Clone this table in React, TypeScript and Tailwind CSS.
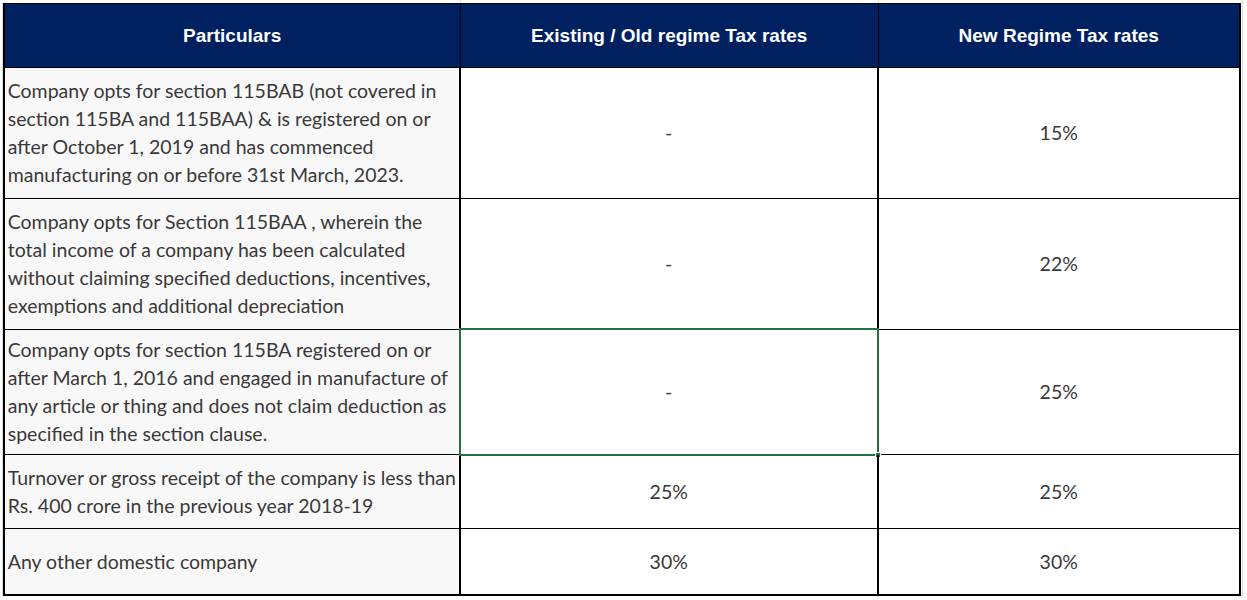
const rows = [
  {
    h: "h-[131px]",
    lines: [
      "Company opts for section 115BAB (not covered in",
      "section 115BA and 115BAA) & is registered on or",
      "after October 1, 2019 and has commenced",
      "manufacturing on or before 31st March, 2023.",
    ],
    old: "-",
    nu: "15%",
  },
  {
    h: "h-[131px]",
    lines: [
      "Company opts for Section 115BAA , wherein the",
      "total income of a company has been calculated",
      "without claiming specified deductions, incentives,",
      "exemptions and additional depreciation",
    ],
    old: "-",
    nu: "22%",
  },
  {
    h: "h-[125px]",
    lines: [
      "Company opts for section 115BA registered on or",
      "after March 1, 2016 and engaged in manufacture of",
      "any article or thing and does not claim deduction as",
      "specified in the section clause.",
    ],
    old: "-",
    nu: "25%",
    selected: true,
  },
  {
    h: "h-[74px]",
    lines: [
      "Turnover or gross receipt of the company is less than",
      "Rs. 400 crore in the previous year 2018-19",
    ],
    old: "25%",
    nu: "25%",
  },
  {
    h: "h-[67px]",
    lines: ["Any other domestic company"],
    old: "30%",
    nu: "30%",
    last: true,
  },
]

export default function App() {
  return (
    <div className="w-[1247px] h-[600px] bg-white overflow-hidden font-['Lato',sans-serif] text-[#3a3838]">
      {/* gridline strip above the table */}
      <div className="flex h-[3px] pl-[4px]">
        <div className="w-[457px] border-r border-[#dadada]" />
        <div className="w-[418px] border-r border-[#dadada]" />
        <div className="w-[364px] border-r border-[#dadada]" />
      </div>

      <div className="flex">
        <div className="w-[3px] border-r border-[#dadada]" />
        <div className="w-[1238px] border-l-2 border-t border-black">
          {/* header */}
          <div className="flex h-[64px] bg-[#002060] text-white font-['Liberation_Sans',Arial,sans-serif] font-bold text-[19px] border-b border-black">
            <div className="w-[456px] flex items-center justify-center border-r border-black pt-[1px]">Particulars</div>
            <div className="w-[418px] flex items-center justify-center border-r border-black pt-[1px]">Existing / Old regime Tax rates</div>
            <div className="w-[362px] flex items-center justify-center border-r-2 border-black pt-[1px]">New Regime Tax rates</div>
          </div>

          {rows.map((r, i) => (
            <div key={i} className={`flex ${r.h} ${r.last ? "border-b-2" : "border-b"} border-black text-[19.5px] leading-[28px]`}>
              <div className="w-[456px] bg-[#f8f8f8] border-r-2 border-black flex flex-col justify-center pl-[3px] whitespace-nowrap">
                {r.lines.map((l, j) => (
                  <span key={j}>{l}</span>
                ))}
              </div>
              <div className="relative w-[418px] border-r-2 border-black flex items-center justify-center">
                {r.old}
                {r.selected && (
                  <div className="absolute -top-[2px] -bottom-[2px] -left-[2px] -right-[2px] border-2 border-[#217346]">
                    <div className="absolute -right-[4px] -bottom-[4px] w-[6px] h-[6px] bg-[#217346] border border-white" />
                  </div>
                )}
              </div>
              <div className="w-[362px] border-r-2 border-black flex items-center justify-center">{r.nu}</div>
            </div>
          ))}
        </div>
        <div className="w-[6px] border-l border-[#dadada] ml-[1px]" />
      </div>
    </div>
  )
}
